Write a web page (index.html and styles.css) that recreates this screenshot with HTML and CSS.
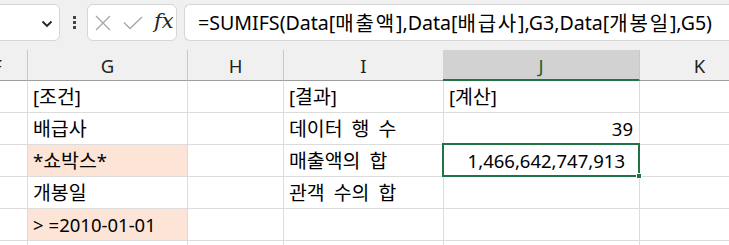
FILE: index.html
```html
<!DOCTYPE html>
<html lang="ko">
<head>
<meta charset="utf-8">
<link rel="stylesheet" href="styles.css">
</head>
<body>
<div class="app">
  <div class="toolbar">
    <div class="namebox">
      <svg class="chev" width="12" height="8" viewBox="0 0 12 8"><polyline points="1.5,1.5 6,6 10.5,1.5" fill="none" stroke="#222" stroke-width="1.8"/></svg>
    </div>
    <div class="dots"><span></span><span></span><span></span></div>
    <div class="fxbox">
      <svg class="ico" width="16" height="16" viewBox="0 0 16 16"><path d="M1 1 L15 15 M15 1 L1 15" stroke="#a6a6a6" stroke-width="1.3" fill="none"/></svg>
      <svg class="ico" width="20" height="14" viewBox="0 0 20 14"><polyline points="1,6.5 7,12.5 19,1" stroke="#a6a6a6" stroke-width="1.3" fill="none"/></svg>
      <span class="fx">fx</span>
    </div>
    <div class="formula">=SUMIFS(Data[<span class="ko">매출액</span>],Data[<span class="ko">배급사</span>],G3,Data[<span class="ko">개봉일</span>],G5)</div>
  </div>
  <div class="sheet">
    <div class="hdr">F</div><div class="hdr">G</div><div class="hdr">H</div><div class="hdr">I</div><div class="hdr sel">J</div><div class="hdr">K</div>

    <div class="c"></div><div class="c"><span>[<span class="ko">조건</span>]</span></div><div class="c"></div><div class="c"><span>[<span class="ko">결과</span>]</span></div><div class="c"><span>[<span class="ko">계산</span>]</span></div><div class="c"></div>

    <div class="c"></div><div class="c"><span class="ko">배급사</span></div><div class="c"></div><div class="c"><span class="ko">데이터 행 수</span></div><div class="c num">39</div><div class="c"></div>

    <div class="c"></div><div class="c fill"><span>*<span class="ko">쇼박스</span>*</span></div><div class="c"></div><div class="c"><span class="ko">매출액의 합</span></div><div class="c num acct active">1,466,642,747,913<span class="handle"></span></div><div class="c"></div>

    <div class="c"></div><div class="c"><span class="ko">개봉일</span></div><div class="c"></div><div class="c"><span class="ko">관객 수의 합</span></div><div class="c"></div><div class="c"></div>

    <div class="c"></div><div class="c fill"><span><span class="op">&gt;</span>=2010-01-01</span></div><div class="c"></div><div class="c"></div><div class="c"></div><div class="c"></div>

    <div class="c"></div><div class="c"></div><div class="c"></div><div class="c"></div><div class="c"></div><div class="c"></div>
  </div>
</div>
</body>
</html>
```

FILE: styles.css
```css
* { box-sizing: border-box; }
html, body { margin: 0; padding: 0; }
body {
  width: 729px;
  height: 245px;
  overflow: hidden;
  background: #f0f0f0;
  font-family: "Noto Sans", "Noto Sans CJK KR", sans-serif;
  color: #000;
}
.app { display: flex; flex-direction: column; height: 245px; overflow: hidden; }

.toolbar {
  height: 50px;
  flex: 0 0 50px;
  display: flex;
  align-items: flex-start;
  padding-top: 4px;
  background: #f0f0f0;
}
.namebox {
  width: 70px;
  margin-left: -10px;
  height: 37px;
  background: #fff;
  border: 1px solid #d6d6d6;
  border-radius: 6px;
  display: flex;
  align-items: center;
  justify-content: flex-end;
  padding-right: 6px;
}
.chev { display: block; margin-top: 2px; }
.dots {
  width: 27px;
  height: 37px;
  display: flex;
  flex-direction: column;
  align-items: center;
  justify-content: center;
  gap: 2px;
  padding-left: 1px;
}
.dots span { width: 3px; height: 3px; background: #444; display: block; }
.fxbox {
  width: 90px;
  height: 37px;
  background: #fff;
  border: 1px solid #d6d6d6;
  border-radius: 6px;
  display: flex;
  align-items: center;
  padding-left: 7px;
  gap: 12px;
}
.ico { display: block; }
.fx {
  font-family: "DejaVu Serif", "Liberation Serif", serif;
  font-style: italic;
  font-size: 21px;
  color: #222;
  line-height: 1;
  margin-top: -2px;
  margin-left: -1px;
}
.formula {
  margin-left: 7px;
  flex: 1 0 auto;
  height: 37px;
  background: #fff;
  border: 1px solid #d6d6d6;
  border-right: none;
  border-radius: 6px 0 0 6px;
  display: flex;
  align-items: center;
  padding-left: 13px;
  font-size: 19.6px;
  white-space: nowrap;
  color: #000;
}
.formula .ko { font-size: 20px; letter-spacing: 1.8px; }

.sheet {
  margin-left: -33px;
  display: grid;
  grid-template-columns: 61px 160px 96px 160px 196px 120px;
  grid-template-rows: 31px repeat(6, 32px);
  background: #fff;
}
.hdr {
  background: #f0f0f0;
  border-right: 1px solid #c8c8c8;
  border-bottom: 1px solid #9e9e9e;
  display: flex;
  align-items: center;
  justify-content: center;
  font-size: 18.5px;
  color: #222;
  padding-top: 1px;
}
.hdr.sel {
  background: #d2d2d2;
  border-bottom: 2px solid #217346;
  color: #185c37;
  margin-left: -1px;
}
.c {
  border-right: 1px solid #dcdcdc;
  border-bottom: 1px solid #dcdcdc;
  display: flex;
  align-items: flex-end;
  padding: 0 5px 2px 5px;
  font-size: 18.5px;
  line-height: 26px;
  white-space: nowrap;
  position: relative;
}
.c .ko { font-size: 19.4px; word-spacing: 4px; }
.c .op { margin-right: 5px; }
.c.fill { background: #fce4d6; }
.c.num { justify-content: flex-end; padding-right: 6px; }
.c.acct { padding-right: 14px; }
.c.active::after {
  content: "";
  position: absolute;
  left: -2px;
  top: -2px;
  right: -1px;
  bottom: -1px;
  border: 2px solid #217346;
  pointer-events: none;
}
.handle {
  position: absolute;
  right: -3px;
  bottom: -3px;
  width: 6px;
  height: 6px;
  background: #217346;
  border: 1px solid #fff;
  z-index: 2;
}
```
